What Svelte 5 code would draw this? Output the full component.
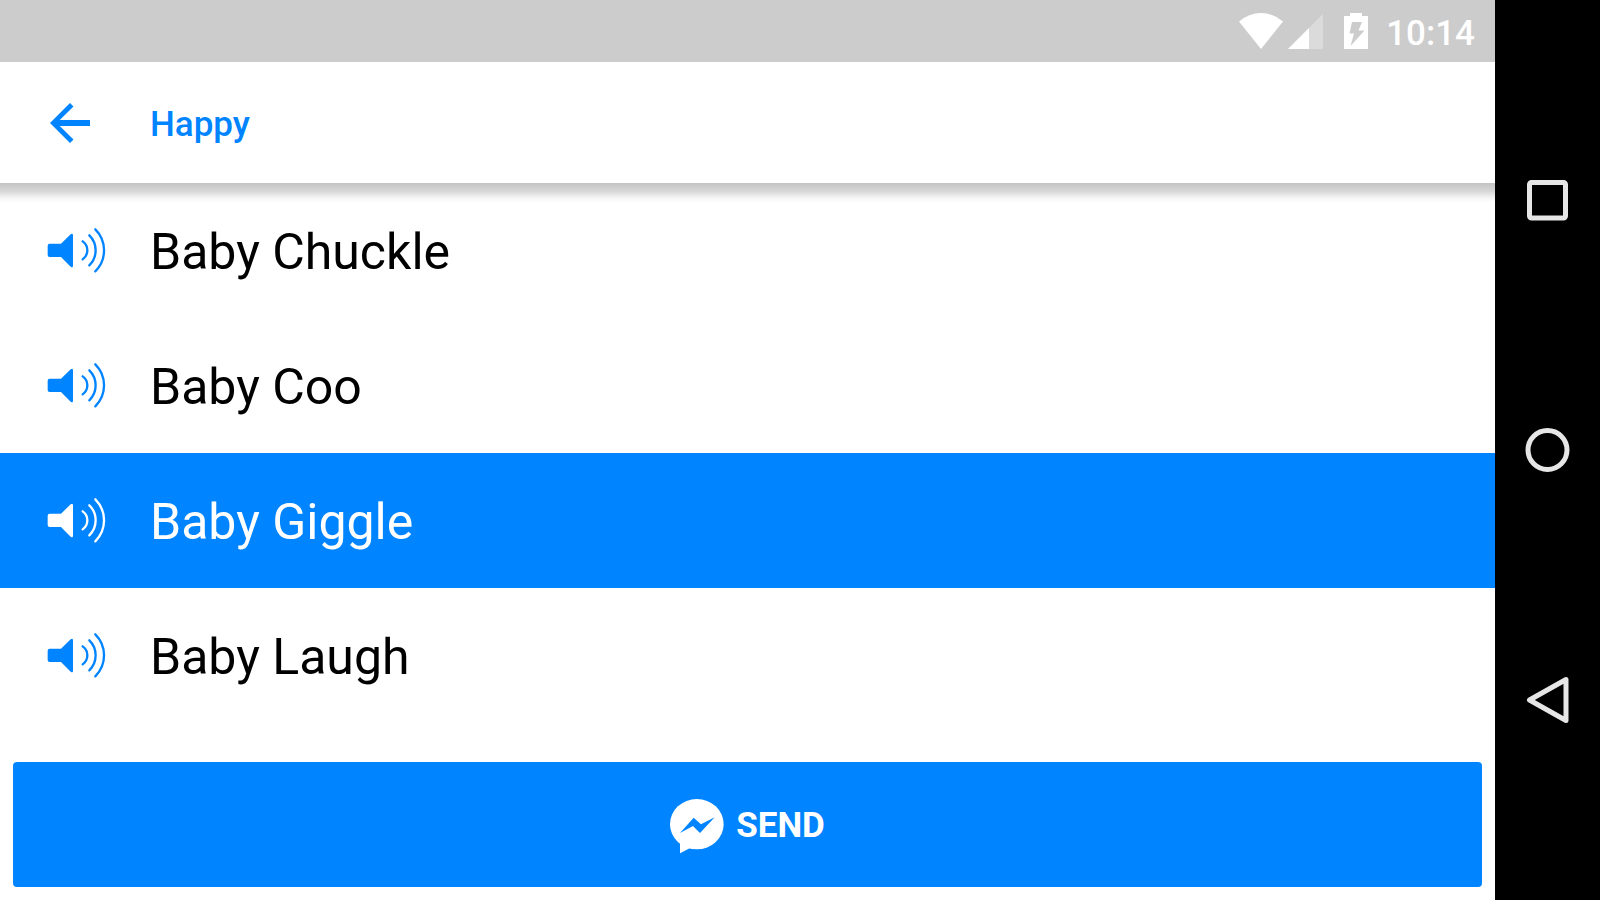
<script>
    const sounds = ["Baby Chuckle", "Baby Coo", "Baby Giggle", "Baby Laugh"];

    let selected = $state("Baby Giggle");
</script>

<div class="device">
    <div class="app">
        <div class="status-bar">
            <svg class="wifi" viewBox="0 0 44 36" aria-hidden="true">
                <path d="M0 8.500Q10 0 22 0T44 8.500L22 36Z" fill="#fff" />
            </svg>
            <svg class="signal" viewBox="0 0 35 35" aria-hidden="true">
                <path d="M0 35L35 0V35Z" fill="#fff" fill-opacity="0.3" />
                <path d="M0 35L21 14V35Z" fill="#fff" />
            </svg>
            <svg class="battery" viewBox="0 0 24 36" aria-hidden="true">
                <path
                    d="M6 0H18V3H24V36H0V3H6ZM8 9L5.500 20.500H10L6.500 33L20.500 17.500H14.500L18 9Z"
                    fill="#fff"
                    fill-rule="evenodd"
                />
            </svg>
            <time>10:14</time>
        </div>

        <header>
            <button class="back" aria-label="Back">
                <svg viewBox="0 0 24 24" aria-hidden="true">
                    <path
                        d="M20 10.800H7.900l5.500-5.400L12 4l-8 8 8 8 1.400-1.400-5.500-5.400H20z"
                        fill="currentColor"
                    />
                </svg>
            </button>
            <h1>Happy</h1>
        </header>

        <ul>
            {#each sounds as sound}
                <li>
                    <button
                        class="sound"
                        class:selected={sound === selected}
                        aria-pressed={sound === selected}
                        onclick={() => (selected = sound)}
                    >
                        <svg viewBox="0 0 180 138" aria-hidden="true">
                            <path
                                d="M8 47H42L71 19Q78 14 78 22V113Q78 121 71 116L42 87H8Q2 87 2 81V53Q2 47 8 47Z"
                                fill="currentColor"
                            />
                            <g
                                fill="none"
                                stroke="currentColor"
                                stroke-width="7"
                                stroke-linecap="round"
                            >
                                <path d="M107 40A33 33 0 0 1 107 94" />
                                <path d="M127 22A63 63 0 0 1 127 112" />
                                <path d="M145 4A89 89 0 0 1 145 130" />
                            </g>
                        </svg>
                        <span>{sound}</span>
                    </button>
                </li>
            {/each}
        </ul>

        <footer>
            <button class="send">
                <svg viewBox="0 0 162 165" aria-hidden="true">
                    <ellipse cx="80.500" cy="75.500" rx="80.500" ry="75.500" fill="#fff" />
                    <path d="M30 125V163L62 146Z" fill="#fff" />
                    <path
                        d="M30 102L71 56L93 76L134 55L90 102L69 81Z"
                        fill="#0084ff"
                    />
                </svg>
                <span>SEND</span>
            </button>
        </footer>
    </div>

    <nav>
        <button aria-label="Recent apps">
            <svg viewBox="0 0 48 48" aria-hidden="true">
                <rect x="5.500" y="6.500" width="36" height="35.500" rx="2" />
            </svg>
        </button>
        <button aria-label="Home">
            <svg viewBox="0 0 48 48" aria-hidden="true">
                <circle cx="23.500" cy="24" r="19.500" />
            </svg>
        </button>
        <button aria-label="Go back">
            <svg viewBox="0 0 48 48" aria-hidden="true">
                <path d="M5.500 24L42 3.500V44.500Z" />
            </svg>
        </button>
    </nav>
</div>

<style>
    :global(body) {
        margin: 0;
    }

    .device {
        display: flex;
        min-height: 100vh;
        font-family: Roboto, sans-serif;
        background: #fff;
    }

    .app {
        flex: 1;
        display: flex;
        flex-direction: column;
        min-width: 0;
    }

    svg {
        display: block;
        flex: none;
    }

    button {
        margin: 0;
        padding: 0;
        border: none;
        background: none;
        font-family: inherit;
        color: inherit;
        cursor: pointer;
    }

    .status-bar {
        display: flex;
        align-items: center;
        justify-content: flex-end;
        height: 62px;
        padding-right: 20px;
        background: #ccc;
        color: #fff;
    }

    .wifi {
        width: 44px;
        height: 36px;
        margin-right: 5px;
    }

    .signal {
        width: 35px;
        height: 35px;
        margin-right: 21px;
    }

    .battery {
        width: 24px;
        height: 36px;
        margin-right: 18px;
    }

    time {
        padding-top: 5px;
        font-size: 35px;
        line-height: 40px;
        font-weight: 500;
    }

    header {
        position: relative;
        display: flex;
        align-items: center;
        gap: 50px;
        height: 121px;
        padding-left: 40px;
        background: #fff;
        color: #0084ff;
    }

    /* skugga över listan */
    header::after {
        content: "";
        position: absolute;
        top: 100%;
        left: 0;
        right: 0;
        height: 20px;
        background: linear-gradient(
            rgba(0, 0, 0, 0.23),
            rgba(0, 0, 0, 0.16) 40%,
            rgba(0, 0, 0, 0.04) 75%,
            transparent
        );
        pointer-events: none;
    }

    .back svg {
        width: 60px;
        height: 60px;
    }

    h1 {
        margin: 0;
        padding-top: 4px;
        font-size: 35px;
        line-height: 40px;
        font-weight: 500;
    }

    ul {
        flex: 1;
        margin: 0;
        padding: 0;
        list-style: none;
    }

    .sound {
        display: flex;
        align-items: center;
        gap: 43px;
        width: 100%;
        height: 135px;
        padding-left: 47px;
        color: #0084ff;
        text-align: left;
    }

    .sound svg {
        width: 60px;
        height: 46px;
    }

    .sound span {
        padding-top: 2px;
        font-size: 50px;
        line-height: 60px;
        color: #000;
    }

    .sound.selected {
        background: #0084ff;
        color: #fff;
    }

    .sound.selected span {
        color: #fff;
    }

    footer {
        padding: 13px;
    }

    .send {
        display: flex;
        align-items: center;
        justify-content: center;
        gap: 12px;
        width: 100%;
        height: 125px;
        padding-top: 3px;
        border-radius: 4px;
        background: #0084ff;
        color: #fff;
        font-size: 35px;
        line-height: 40px;
        font-weight: 700;
    }

    .send svg {
        width: 54px;
        height: 55px;
    }

    nav {
        display: flex;
        flex-direction: column;
        width: 105px;
        padding: 75px 0;
        box-sizing: border-box;
        background: #000;
    }

    nav button {
        flex: 1;
        display: flex;
        align-items: center;
        justify-content: center;
    }

    nav svg {
        width: 48px;
        height: 48px;
        fill: none;
        stroke: #e6e6e6;
        stroke-width: 5;
        stroke-linejoin: round;
    }
</style>
